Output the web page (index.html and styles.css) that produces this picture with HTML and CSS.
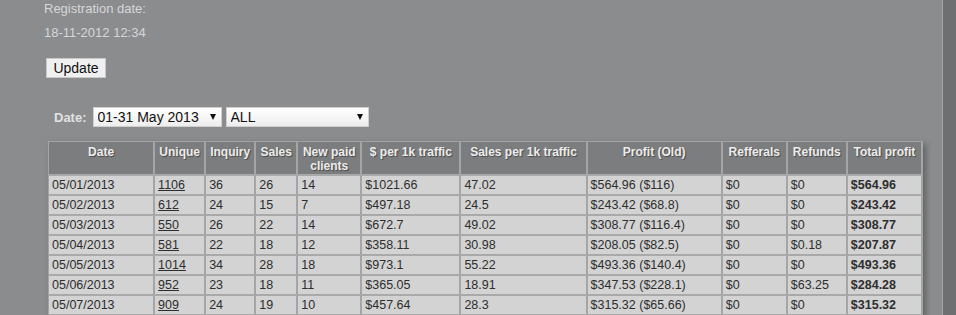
FILE: index.html
```html
<!DOCTYPE html>
<html lang="en">
  <head>
    <meta charset="UTF-8" />
    <title>Statistics</title>
    <link rel="stylesheet" href="styles.css">
  </head>
  <body>
    <div class="page">
      <div class="content">
        <p class="reg-label">Registration date:</p>
        <p class="reg-value">18-11-2012 12:34</p>

        <button type="button" class="update-button">Update</button>

        <form class="filter-form">
          <label class="filter-label">Date:</label>
          <span class="select-wrap period">
            <select>
              <option>01-31 May 2013</option>
            </select>
          </span>
          <span class="select-wrap source">
            <select>
              <option>ALL</option>
            </select>
          </span>
        </form>

        <table class="stats-table">
          <colgroup>
            <col style="width: 106px">
            <col style="width: 51px">
            <col style="width: 50px">
            <col style="width: 42px">
            <col style="width: 64px">
            <col style="width: 99px">
            <col style="width: 126px">
            <col style="width: 135px">
            <col style="width: 65px">
            <col style="width: 60px">
            <col style="width: 75px">
          </colgroup>
          <thead>
            <tr>
              <th>Date</th>
              <th>Unique</th>
              <th>Inquiry</th>
              <th>Sales</th>
              <th>New paid clients</th>
              <th>$ per 1k traffic</th>
              <th>Sales per 1k traffic</th>
              <th>Profit (Old)</th>
              <th>Refferals</th>
              <th>Refunds</th>
              <th>Total profit</th>
            </tr>
          </thead>
          <tbody>
            <tr>
              <td>05/01/2013</td><td><a href="#">1106</a></td><td>36</td><td>26</td><td>14</td>
              <td>$1021.66</td><td>47.02</td><td>$564.96 ($116)</td><td>$0</td><td>$0</td>
              <td class="total">$564.96</td>
            </tr>
            <tr>
              <td>05/02/2013</td><td><a href="#">612</a></td><td>24</td><td>15</td><td>7</td>
              <td>$497.18</td><td>24.5</td><td>$243.42 ($68.8)</td><td>$0</td><td>$0</td>
              <td class="total">$243.42</td>
            </tr>
            <tr>
              <td>05/03/2013</td><td><a href="#">550</a></td><td>26</td><td>22</td><td>14</td>
              <td>$672.7</td><td>49.02</td><td>$308.77 ($116.4)</td><td>$0</td><td>$0</td>
              <td class="total">$308.77</td>
            </tr>
            <tr>
              <td>05/04/2013</td><td><a href="#">581</a></td><td>22</td><td>18</td><td>12</td>
              <td>$358.11</td><td>30.98</td><td>$208.05 ($82.5)</td><td>$0</td><td>$0.18</td>
              <td class="total">$207.87</td>
            </tr>
            <tr>
              <td>05/05/2013</td><td><a href="#">1014</a></td><td>34</td><td>28</td><td>18</td>
              <td>$973.1</td><td>55.22</td><td>$493.36 ($140.4)</td><td>$0</td><td>$0</td>
              <td class="total">$493.36</td>
            </tr>
            <tr>
              <td>05/06/2013</td><td><a href="#">952</a></td><td>23</td><td>18</td><td>11</td>
              <td>$365.05</td><td>18.91</td><td>$347.53 ($228.1)</td><td>$0</td><td>$63.25</td>
              <td class="total">$284.28</td>
            </tr>
            <tr>
              <td>05/07/2013</td><td><a href="#">909</a></td><td>24</td><td>19</td><td>10</td>
              <td>$457.64</td><td>28.3</td><td>$315.32 ($65.66)</td><td>$0</td><td>$0</td>
              <td class="total">$315.32</td>
            </tr>
          </tbody>
        </table>
      </div>
    </div>
  </body>
</html>
```

FILE: styles.css
```css
* {
  margin: 0;
  padding: 0;
  box-sizing: border-box;
}

body {
  font-family: "Liberation Sans", Arial, sans-serif;
  font-size: 13px;
  background: #6d6f71;
  overflow: hidden;
}

.page {
  width: 943px;
  min-height: 100vh;
  background: #8a8c8e;
  border-right: 1px solid #a4a6a8;
}

.content {
  padding-left: 44px;
}

.reg-label,
.reg-value {
  color: #d6d7d8;
  line-height: 16px;
}

.reg-label {
  padding-top: 1px;
}

.reg-value {
  margin-top: 8px;
}

.update-button {
  display: block;
  margin: 17px 0 0 2px;
  width: 60px;
  height: 20px;
  font-family: inherit;
  font-size: 14px;
  color: #111;
  background: #f0f0f0;
  border: 1px solid #c9c9c9;
  line-height: 18px;
}

.filter-form {
  display: flex;
  align-items: center;
  margin-top: 29px;
  padding-left: 10px;
}

.filter-label {
  color: #e2e2e2;
  font-weight: bold;
  font-size: 13px;
  margin-right: 6px;
}

.select-wrap {
  position: relative;
  display: inline-block;
  height: 20px;
  margin-right: 4px;
}

.select-wrap.period {
  width: 129px;
}

.select-wrap.source {
  width: 143px;
}

.select-wrap select {
  appearance: none;
  -webkit-appearance: none;
  width: 100%;
  height: 20px;
  font-family: inherit;
  font-size: 14px;
  color: #111;
  padding: 0 0 0 4px;
  border: 1px solid #cfcfcf;
  border-radius: 0;
  background: linear-gradient(#ffffff, #ededed);
}

.select-wrap::after {
  content: "";
  position: absolute;
  right: 6px;
  top: 7px;
  border-left: 3.5px solid transparent;
  border-right: 3.5px solid transparent;
  border-top: 6px solid #111;
  pointer-events: none;
}

.stats-table {
  margin: 14px 0 0 4px;
  width: 875px;
  table-layout: fixed;
  border-collapse: separate;
  border-spacing: 0;
  border-top: 1px solid #a2a4a6;
  border-left: 1px solid #a2a4a6;
  box-shadow: 3px 3px 6px rgba(0, 0, 0, 0.3);
  font-size: 12.5px;
}

.stats-table th,
.stats-table td {
  border-right: 2px solid #a4a5a6;
  border-bottom: 2px solid #a9a9a9;
}

.stats-table th {
  background: #7b7d7f;
  color: #ececec;
  font-weight: bold;
  font-size: 12px;
  line-height: 14px;
  height: 34px;
  padding: 3px 2px 1px;
  vertical-align: top;
  text-align: center;
  text-shadow: 1px 1px 1px #4a4a4a;
}

.stats-table td {
  background: #d3d3d3;
  color: #2e2e2e;
  height: 20px;
  line-height: 18px;
  padding: 0 3px;
  white-space: nowrap;
}

.stats-table td a {
  color: #2e2e2e;
  text-decoration: underline;
}

.stats-table td.total {
  font-weight: bold;
}
```
